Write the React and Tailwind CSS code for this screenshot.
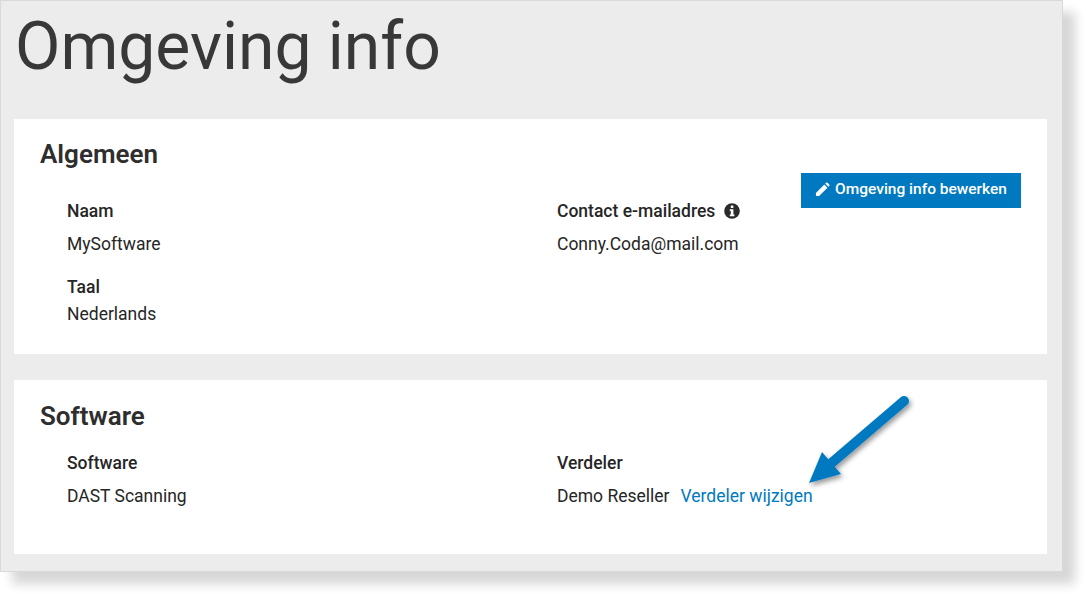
import React from "react";

function Pencil() {
  return (
    <svg width="15" height="15" viewBox="0 0 16 16" className="mr-[5px] shrink-0">
      <path fill="#fff" d="M1 11.6 9.9 2.7l3.4 3.4L4.4 15H1v-3.4zM10.9 1.7l1-1c.4-.4 1-.4 1.4 0l2 2c.4.4.4 1 0 1.4l-1 1-3.4-3.4z" />
    </svg>
  );
}

function Info() {
  return (
    <svg width="16" height="16" viewBox="0 0 16 16" className="ml-[9px] shrink-0">
      <circle cx="8" cy="8" r="7.8" fill="#2b2b2b" />
      <rect x="6.8" y="2.6" width="2.6" height="2.5" fill="#fff" rx="0.4" />
      <path fill="#fff" d="M5.8 6.3h3.6v5.2h1v1.7H5.8v-1.7h1V8h-1z" />
    </svg>
  );
}

function Field({ label, children, className = "" }) {
  return (
    <div className={className}>
      <div className="text-[17.5px] leading-[22px] font-medium text-[#262626] flex items-center">{label}</div>
      <div className="text-[17.5px] leading-[22px] text-[#262626]">{children}</div>
    </div>
  );
}

export default function App() {
  return (
    <div className="relative w-[1086px] h-[594px] bg-white overflow-hidden font-['Roboto',sans-serif]">
      <div className="w-[1063px] h-[572px] bg-[#ececec] border border-[#d9d9d9] shadow-[12px_12px_10px_rgba(0,0,0,0.16)] pl-[13px] pr-[15px] flex flex-col">
        <h1 className="h-[118px] pt-[8px] pl-[1px] text-[66px] leading-[76px] font-normal text-[#383838]">Omgeving info</h1>

        <section className="relative h-[235px] bg-white pl-[26px] pt-[18px]">
          <h2 className="text-[26px] leading-[34px] font-semibold text-[#2e2e2e]">Algemeen</h2>
          <div className="grid grid-cols-[490px_1fr] pl-[27px] pt-[29px]">
            <Field label="Naam" className="h-[74px]">
              <div className="pt-[11px]">MySoftware</div>
            </Field>
            <Field label={<>Contact e-mailadres<Info /></>}>
              <div className="pt-[11px]">Conny.Coda@mail.com</div>
            </Field>
            <Field label="Taal" className="pt-[2px]">
              <div className="pt-[5px]">Nederlands</div>
            </Field>
          </div>
          <button className="absolute left-[787px] top-[54px] w-[220px] h-[35px] bg-[#0079c1] text-white text-[15.5px] font-medium flex items-center justify-center pb-[2px]">
            <Pencil />
            Omgeving info bewerken
          </button>
        </section>

        <section className="mt-[26px] h-[174px] bg-white pl-[26px] pt-[19px]">
          <h2 className="text-[26px] leading-[34px] font-semibold text-[#2e2e2e]">Software</h2>
          <div className="grid grid-cols-[490px_1fr] pl-[27px] pt-[19px]">
            <Field label="Software">
              <div className="pt-[11px]">DAST Scanning</div>
            </Field>
            <Field label="Verdeler">
              <div className="pt-[11px] flex gap-[11px]">
                <span>Demo Reseller</span>
                <a className="text-[#0079c1]">Verdeler wijzigen</a>
              </div>
            </Field>
          </div>
        </section>
      </div>

      <svg className="absolute left-[800px] top-[390px]" width="120" height="100" viewBox="800 390 120 100">
        <defs>
          <filter id="s" x="-30%" y="-30%" width="170%" height="170%">
            <feDropShadow dx="2" dy="3" stdDeviation="2.5" floodColor="#000" floodOpacity="0.4" />
          </filter>
        </defs>
        <g filter="url(#s)">
          <path d="M904 401 828 466" stroke="#0079c1" strokeWidth="10" strokeLinecap="round" fill="none" />
          <path fill="#0079c1" d="M809 483 822 452 841 474z" />
        </g>
      </svg>
    </div>
  );
}
